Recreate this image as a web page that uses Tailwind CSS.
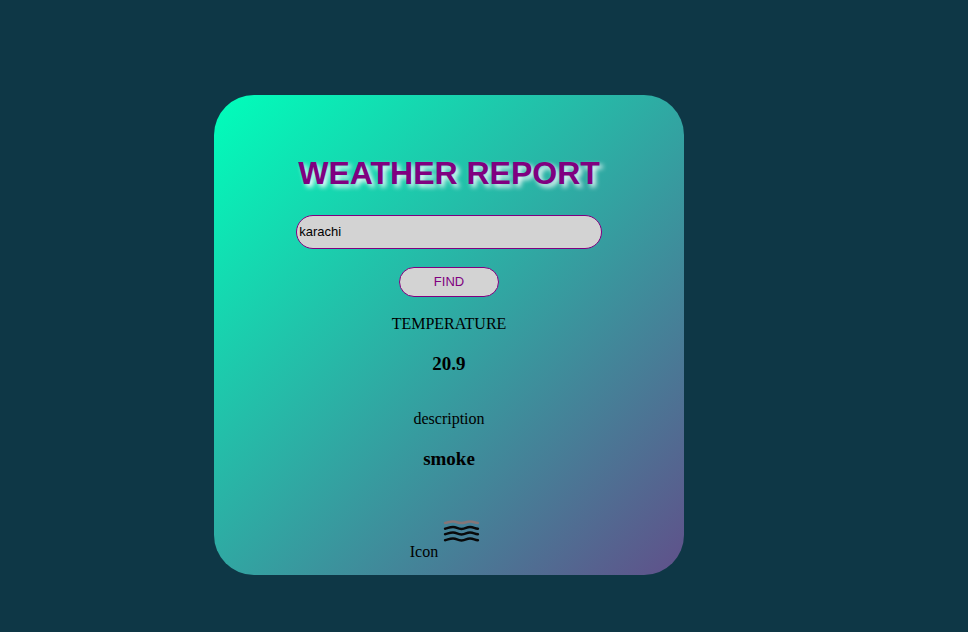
<!DOCTYPE html>
<html lang="en">
<head>
<meta charset="utf-8">
<meta name="viewport" content="width=device-width, initial-scale=1">
<title>Weather Report</title>
<script src="https://cdn.jsdelivr.net/npm/@tailwindcss/browser@4"></script>
</head>
<body class="min-h-screen bg-[#0e3746] pt-[95px] pr-[70px] pb-12 text-black font-['Liberation_Serif','Times_New_Roman',serif]">
<main class="mx-auto flex w-full max-w-[470px] flex-col items-center rounded-[40px] bg-[linear-gradient(135deg,#00ffbb,#60508a)] pt-15 pb-3.5 text-center">
  <h1 class="font-['Liberation_Sans',Arial,sans-serif] text-[32px] leading-9 font-bold text-[#800080] [text-shadow:3px_3px_5px_white]">WEATHER REPORT</h1>
  <form class="mt-6 flex w-full flex-col items-center gap-[18px] font-['Liberation_Sans',Arial,sans-serif]" onsubmit="return false">
    <input type="text" aria-label="City" value="karachi" class="h-[34px] w-[65%] rounded-[20px] border border-[#800080] bg-[#d3d3d3] px-0.5 pb-0.5 text-[13px] text-black">
    <button type="submit" class="h-[30px] w-[100px] rounded-[20px] border border-[#800080] bg-[#d3d3d3] text-[13px] text-[#800080]">FIND</button>
  </form>
  <section class="mt-[18px]">
    <p class="text-base leading-[18px]">TEMPERATURE</p>
    <h2 class="mt-5 text-[19px] leading-[22px] font-bold">20.9</h2>
  </section>
  <section class="mt-[35px]">
    <p class="text-base leading-[18px]">description</p>
    <h2 class="mt-5 text-[19px] leading-[22px] font-bold">smoke</h2>
  </section>
  <section class="mt-[35px] flex items-end justify-center">
    <p class="text-base leading-[18px]">Icon</p>
    <svg class="mb-1.5 ml-1 h-[50px] w-[46px]" viewBox="0 0 46 50" fill="none" role="img" aria-label="Smoke">
      <path stroke="#857577" stroke-width="2.5" stroke-linecap="round" d="M3 18C6 17.700 7 16.500 11 16.500S15 18 19.500 18 24 16.500 28 16.500 32 17.700 36 18"/>
      <g stroke="#08090a" stroke-width="2.4" stroke-linecap="round">
        <path d="M3 23.700C6 23.300 7 22 11 22S15 24 19.500 24 24 22 28 22 32 23.300 36 23.700"/>
        <path d="M3 29.200C6 28.800 7 27.500 11 27.500S15 29.500 19.500 29.500 24 27.500 28 27.500 32 28.800 36 29.200"/>
        <path d="M3 35.200C6 34.800 7 33.500 11 33.500S15 35.500 19.500 35.500 24 33.500 28 33.500 32 34.800 36 35.200"/>
      </g>
    </svg>
  </section>
</main>
</body>
</html>
